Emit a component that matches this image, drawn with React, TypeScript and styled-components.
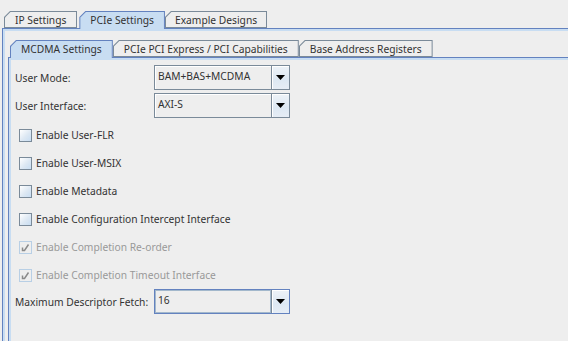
import React, { FC } from 'react';
import styled, { createGlobalStyle } from 'styled-components';

const GlobalStyle = createGlobalStyle`
  html, body {
    margin: 0;
    background: #eeeeee;
    overflow: hidden;
  }

  body {
    color: #333333;
    font-family: "Noto Sans", "DejaVu Sans", sans-serif;
    font-size: 10.25px;
  }
`;

const Frame = styled.div`
  box-sizing: border-box;
  display: flex;
  flex-direction: column;
  height: 341px;
  padding: 11px 0 0 2px;
  width: 568px;
`;

const TabRow = styled.div`
  display: flex;
  height: 17px;
  padding-left: 2px;
`;

const Tab = styled.div<{ $selected?: boolean; $pad?: number }>`
  align-items: center;
  background: ${({ $selected }) => ($selected ? '#6382bf' : '#7a8a99')};
  clip-path: polygon(0 100%, 0 6px, 6px 0, 100% 0, 100% 100%);
  display: flex;
  height: ${({ $selected }) => ($selected ? '18px' : '17px')};
  padding: 0 ${({ $pad }) => $pad ?? 10}px;
  position: relative;
  white-space: nowrap;
  z-index: ${({ $selected }) => ($selected ? 2 : 1)};

  &::before {
    background: ${({ $selected }) => ($selected ? '#c8ddf2' : '#eeeeee')};
    bottom: ${({ $selected }) => ($selected ? '0' : '1px')};
    clip-path: polygon(0 100%, 0 5.5px, 5.5px 0, 100% 0, 100% 100%);
    content: '';
    left: 1px;
    position: absolute;
    right: 1px;
    top: 1px;
  }

  span {
    position: relative;
    top: ${({ $selected }) => ($selected ? '-0.5px' : '0')};
  }
`;

const Pane = styled.div`
  background: #c8ddf2;
  border-left: 1px solid #6382bf;
  border-top: 1px solid #6382bf;
  display: flex;
  flex: 1;
  flex-direction: column;
  padding: 2px 0 0 2px;
`;

const OuterBody = styled.div`
  background: #eeeeee;
  display: flex;
  flex: 1;
  flex-direction: column;
  padding: 9px 0 0 3px;
`;

const Form = styled.div`
  background: #eeeeee;
  display: flex;
  flex: 1;
  flex-direction: column;
  padding: 5px 0 0 4px;
`;

const FieldRow = styled.div<{ $gap?: number }>`
  align-items: center;
  display: grid;
  grid-template-columns: 139px 136px;
  height: 25px;
  margin-top: ${({ $gap }) => $gap ?? 0}px;
  white-space: nowrap;
`;

const Combo = styled.div<{ $focused?: boolean }>`
  background: #eeeeee;
  border: 1px solid ${({ $focused }) => ($focused ? '#6382bf' : '#7a8a99')};
  box-shadow: inset 1px 1px 0 #ffffff;
  box-sizing: border-box;
  display: flex;
  height: 25px;
`;

const ComboValue = styled.div<{ $focused?: boolean }>`
  border: 1px solid ${({ $focused }) => ($focused ? '#a3b8cc' : 'transparent')};
  flex: 1;
  line-height: 18px;
  padding: 0 2px;
`;

const ArrowButton = styled.div`
  align-items: center;
  background: linear-gradient(#eef3f8, #dde8f3 60%, #e6edf5);
  border-left: 1px solid #7a8a99;
  box-shadow: inset 1px 1px 0 #ffffff;
  display: flex;
  justify-content: center;
  width: 17px;
`;

const CheckRow = styled.label<{ $disabled?: boolean; $gap?: number }>`
  align-items: center;
  color: ${({ $disabled }) => ($disabled ? '#999999' : '#333333')};
  display: flex;
  gap: 4px;
  height: 28px;
  margin-top: ${({ $gap }) => $gap ?? 0}px;
  padding-left: 4px;
`;

const Box = styled.span<{ $disabled?: boolean }>`
  align-items: center;
  background: ${({ $disabled }) =>
    $disabled ? '#eeeeee' : 'linear-gradient(135deg, #ffffff, #dde8f3 55%, #c8ddf2)'};
  border: 1px solid ${({ $disabled }) => ($disabled ? '#b8cfe5' : '#7a8a99')};
  box-sizing: border-box;
  display: flex;
  height: 13px;
  justify-content: center;
  width: 13px;
`;

const ComboField: FC<{ label: string; value: string; focused?: boolean; gap?: number }> = ({
  label,
  value,
  focused,
  gap,
}) => (
  <FieldRow $gap={gap}>
    <span>{label}</span>
    <Combo $focused={focused}>
      <ComboValue $focused={focused}>{value}</ComboValue>
      <ArrowButton>
        <svg width="9" height="5" viewBox="0 0 9 5">
          <path d="M0 0h9L4.5 5z" fill="#000" />
        </svg>
      </ArrowButton>
    </Combo>
  </FieldRow>
);

const Check: FC<{ label: string; checked?: boolean; disabled?: boolean; gap?: number }> = ({
  label,
  checked,
  disabled,
  gap,
}) => (
  <CheckRow $disabled={disabled} $gap={gap}>
    <Box $disabled={disabled}>
      {checked && (
        <svg width="9" height="9" viewBox="0 0 9 9">
          <path d="M1.5 4.5v3h2l4-6" fill="none" stroke="#8a8a8a" strokeWidth="1.5" />
        </svg>
      )}
    </Box>
    {label}
  </CheckRow>
);

const App: FC = () => (
  <Frame>
    <GlobalStyle />
    <TabRow>
      <Tab $pad={11}><span>IP Settings</span></Tab>
      <Tab $selected $pad={11} style={{ marginLeft: 2 }}><span>PCIe Settings</span></Tab>
      <Tab $pad={10}><span>Example Designs</span></Tab>
    </TabRow>
    <Pane>
      <OuterBody>
        <TabRow>
          <Tab $selected $pad={11}><span>MCDMA Settings</span></Tab>
          <Tab $pad={11}><span>PCIe PCI Express / PCI Capabilities</span></Tab>
          <Tab $pad={11}><span>Base Address Registers</span></Tab>
        </TabRow>
        <Pane>
          <Form>
            <ComboField label="User Mode:" value="BAM+BAS+MCDMA" />
            <ComboField label="User Interface:" value="AXI-S" gap={3} />
            <Check label="Enable User-FLR" gap={3} />
            <Check label="Enable User-MSIX" />
            <Check label="Enable Metadata" />
            <Check label="Enable Configuration Intercept Interface" />
            <Check label="Enable Completion Re-order" checked disabled />
            <Check label="Enable Completion Timeout Interface" checked disabled />
            <ComboField label="Maximum Descriptor Fetch:" value="16" focused />
          </Form>
        </Pane>
      </OuterBody>
    </Pane>
  </Frame>
);

export default App;
